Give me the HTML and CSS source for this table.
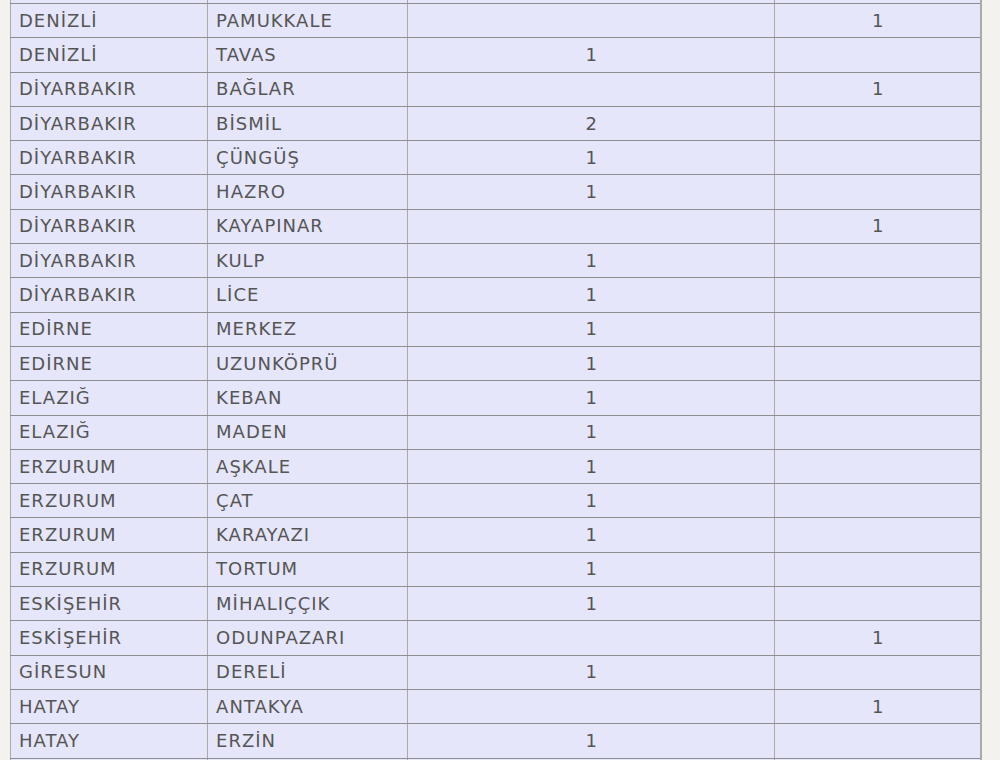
FILE: index.html
```html
<!DOCTYPE html>
<html lang="tr">
<head>
<meta charset="utf-8">
<link rel="stylesheet" href="styles.css">
</head>
<body>
<table class="grid">
<colgroup><col class="c1"><col class="c2"><col class="c3"><col class="c4"></colgroup>
<tbody>
<tr><td></td><td></td><td class="num"></td><td class="num"></td></tr>
<tr><td>DENİZLİ</td><td>PAMUKKALE</td><td class="num"></td><td class="num">1</td></tr>
<tr><td>DENİZLİ</td><td>TAVAS</td><td class="num">1</td><td class="num"></td></tr>
<tr><td>DİYARBAKIR</td><td>BAĞLAR</td><td class="num"></td><td class="num">1</td></tr>
<tr><td>DİYARBAKIR</td><td>BİSMİL</td><td class="num">2</td><td class="num"></td></tr>
<tr><td>DİYARBAKIR</td><td>ÇÜNGÜŞ</td><td class="num">1</td><td class="num"></td></tr>
<tr><td>DİYARBAKIR</td><td>HAZRO</td><td class="num">1</td><td class="num"></td></tr>
<tr><td>DİYARBAKIR</td><td>KAYAPINAR</td><td class="num"></td><td class="num">1</td></tr>
<tr><td>DİYARBAKIR</td><td>KULP</td><td class="num">1</td><td class="num"></td></tr>
<tr><td>DİYARBAKIR</td><td>LİCE</td><td class="num">1</td><td class="num"></td></tr>
<tr><td>EDİRNE</td><td>MERKEZ</td><td class="num">1</td><td class="num"></td></tr>
<tr><td>EDİRNE</td><td>UZUNKÖPRÜ</td><td class="num">1</td><td class="num"></td></tr>
<tr><td>ELAZIĞ</td><td>KEBAN</td><td class="num">1</td><td class="num"></td></tr>
<tr><td>ELAZIĞ</td><td>MADEN</td><td class="num">1</td><td class="num"></td></tr>
<tr><td>ERZURUM</td><td>AŞKALE</td><td class="num">1</td><td class="num"></td></tr>
<tr><td>ERZURUM</td><td>ÇAT</td><td class="num">1</td><td class="num"></td></tr>
<tr><td>ERZURUM</td><td>KARAYAZI</td><td class="num">1</td><td class="num"></td></tr>
<tr><td>ERZURUM</td><td>TORTUM</td><td class="num">1</td><td class="num"></td></tr>
<tr><td>ESKİŞEHİR</td><td>MİHALIÇÇIK</td><td class="num">1</td><td class="num"></td></tr>
<tr><td>ESKİŞEHİR</td><td>ODUNPAZARI</td><td class="num"></td><td class="num">1</td></tr>
<tr><td>GİRESUN</td><td>DERELİ</td><td class="num">1</td><td class="num"></td></tr>
<tr><td>HATAY</td><td>ANTAKYA</td><td class="num"></td><td class="num">1</td></tr>
<tr><td>HATAY</td><td>ERZİN</td><td class="num">1</td><td class="num"></td></tr>
<tr><td></td><td></td><td class="num"></td><td class="num"></td></tr>
</tbody>
</table>
</body>
</html>
```
FILE: styles.css
```css
html, body {
  margin: 0;
  padding: 0;
  background: #f3f2ef;
  overflow: hidden;
}
body {
  padding-left: 10px;
  font-family: "DejaVu Sans", "Open Sans", sans-serif;
}
.grid {
  border-collapse: collapse;
  table-layout: fixed;
  width: 972px;
  margin-top: -31.3px;
  background: #e6e6fa;
  color: #555555;
  font-size: 18px;
  letter-spacing: 1px;
  border-right: 2px solid #aaaaaa;
}
.c1 { width: 197px; }
.c2 { width: 200px; }
.c3 { width: 367px; }
.c4 { width: 206px; }
.grid td {
  height: 34.3px;
  padding: 0 8px;
  box-sizing: border-box;
  border-left: 1px solid #aaaaaa;
  border-right: 1px solid #aaaaaa;
  border-top: 1px solid #8f8f8f;
  border-bottom: 1px solid #8f8f8f;
  vertical-align: middle;
  white-space: nowrap;
  line-height: 1;
}
.grid td.num {
  text-align: center;
  letter-spacing: 0;
}
```
